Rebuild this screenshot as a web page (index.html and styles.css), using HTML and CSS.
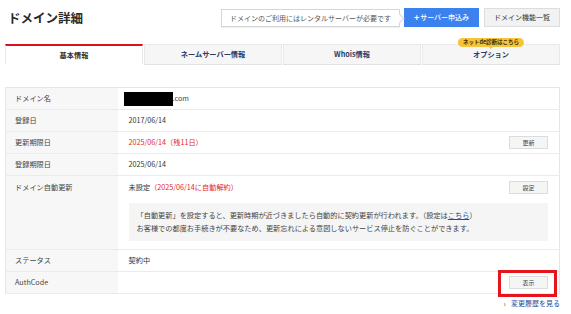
FILE: index.html
```html
<!DOCTYPE html>
<html lang="ja">
<head>
<meta charset="utf-8">
<title>ドメイン詳細</title>
<link rel="stylesheet" href="styles.css">
</head>
<body>
<div class="page">
  <header class="top">
    <h1 class="title">ドメイン詳細</h1>
    <div class="actions">
      <div class="callout">ドメインのご利用にはレンタルサーバーが必要です</div>
      <a class="btn-primary"><span class="plus">+</span>サーバー申込み</a>
      <a class="btn-gray">ドメイン機能一覧</a>
    </div>
  </header>

  <nav class="tabs">
    <div class="tab active">基本情報</div>
    <div class="tab">ネームサーバー情報</div>
    <div class="tab">Whois情報</div>
    <div class="tab">オプション<span class="badge">ネットde診断はこちら</span></div>
  </nav>

  <table class="info">
    <colgroup><col class="col-label"><col></colgroup>
    <tr>
      <th>ドメイン名</th>
      <td><span class="redact"></span><span class="tld">.com</span></td>
    </tr>
    <tr>
      <th>登録日</th>
      <td>2017/06/14</td>
    </tr>
    <tr>
      <th>更新期限日</th>
      <td><div class="cell"><span class="red">2025/06/14（残11日）</span><a class="sbtn">更新</a></div></td>
    </tr>
    <tr>
      <th>登録期限日</th>
      <td>2025/06/14</td>
    </tr>
    <tr class="row-top">
      <th>ドメイン自動更新</th>
      <td>
        <div class="cell"><span>未設定<span class="red">（2025/06/14に自動解約）</span></span><a class="sbtn">設定</a></div>
        <div class="note">「自動更新」を設定すると、更新時期が近づきましたら自動的に契約更新が行われます。（設定は<a class="link">こちら</a>）<br>お客様での都度お手続きが不要なため、更新忘れによる意図しないサービス停止を防ぐことができます。</div>
      </td>
    </tr>
    <tr>
      <th>ステータス</th>
      <td>契約中</td>
    </tr>
    <tr>
      <th>AuthCode</th>
      <td><div class="cell"><span></span><span class="mark"><a class="sbtn">表示</a><span class="annot"></span></span></div></td>
    </tr>
  </table>

  <div class="history"><span class="chev">›</span><a class="hist-link">変更履歴を見る</a></div>
</div>
</body>
</html>
```

FILE: styles.css
```css
* { box-sizing: border-box; }

body {
  margin: 0;
  background: #fff;
  color: #333;
  font-family: "Noto Sans CJK JP", "Noto Sans", sans-serif;
  font-size: 7.2px;
  line-height: 1.4;
}

.page {
  padding: 0 11px 0 5px;
}

/* header */
.top {
  display: flex;
  align-items: center;
  justify-content: space-between;
  margin-top: 8px;
  height: 19px;
}

.title {
  margin: 0 0 0 3px;
  font-size: 12.5px;
  font-weight: 700;
  line-height: 19px;
  color: #2b2b2b;
}

.actions {
  display: flex;
  align-items: center;
}

.callout {
  position: relative;
  height: 18px;
  line-height: 16px;
  padding: 0 8px;
  margin-right: 4px;
  border: 1px solid #d6d6d6;
  background: #fff;
  color: #555;
  font-size: 7px;
  box-shadow: 0 1px 1px rgba(0, 0, 0, 0.06);
}

.callout::after {
  content: "";
  position: absolute;
  right: -4px;
  top: 50%;
  width: 6px;
  height: 6px;
  margin-top: -3px;
  background: #fff;
  border-top: 1px solid #d6d6d6;
  border-right: 1px solid #d6d6d6;
  transform: rotate(45deg);
}

.btn-primary {
  display: flex;
  align-items: center;
  justify-content: center;
  width: 75px;
  height: 19px;
  background: #3b82ef;
  color: #fff;
  font-size: 7px;
  font-weight: 500;
  margin-right: 5px;
}

.plus {
  font-size: 9px;
  font-weight: 700;
  margin-right: 1px;
  line-height: 1;
}

.btn-gray {
  display: flex;
  align-items: center;
  justify-content: center;
  width: 76px;
  height: 19px;
  background: #f2f2f2;
  border: 1px solid #dddddd;
  color: #333;
  font-size: 7px;
}

/* tabs */
.tabs {
  display: grid;
  grid-template-columns: repeat(4, 1fr);
  gap: 1px;
  margin-top: 17px;
}

.tab {
  position: relative;
  display: flex;
  align-items: center;
  justify-content: center;
  height: 21px;
  background: #f6f6f6;
  border: 1px solid #e9e9e9;
  border-bottom-color: #e2e2e2;
  color: #2d3a63;
  font-weight: 700;
}

.tab.active {
  background: #fff;
  border-top: 2px solid #d8121c;
  border-bottom-color: #fff;
  color: #333;
}

.badge {
  position: absolute;
  top: -7px;
  left: 50%;
  transform: translateX(-50%);
  height: 9px;
  padding: 0 5px;
  border-radius: 5px;
  background: #f7c33c;
  color: #3a2c05;
  font-size: 5.5px;
  line-height: 9px;
  font-weight: 700;
  white-space: nowrap;
}

.badge::after {
  content: "";
  position: absolute;
  bottom: -2px;
  left: 50%;
  margin-left: -2px;
  border-left: 2px solid transparent;
  border-right: 2px solid transparent;
  border-top: 2px solid #f7c33c;
}

/* table */
.info {
  width: 100%;
  margin-top: 22px;
  border-collapse: collapse;
  table-layout: fixed;
  border: 1px solid #e6e6e6;
}

.col-label { width: 112px; }

.info th {
  height: 22px;
  padding: 0 9px;
  background: #f7f7f7;
  text-align: left;
  font-weight: 400;
  color: #444;
  vertical-align: middle;
  border-bottom: 1px solid #ebebeb;
}

.info td {
  height: 22px;
  padding: 0 11px;
  vertical-align: middle;
  border-bottom: 1px solid #ebebeb;
}

.row-top th,
.row-top td {
  vertical-align: top;
  padding-top: 5px;
  padding-bottom: 8px;
  line-height: 13px;
}

.cell {
  display: flex;
  align-items: center;
  justify-content: space-between;
}

.red { color: #e02a2a; }

.redact {
  display: inline-block;
  width: 49px;
  height: 14px;
  margin-left: -5px;
  background: #000;
  vertical-align: middle;
}

.tld { color: #444; }

.sbtn {
  display: flex;
  align-items: center;
  justify-content: center;
  width: 39px;
  height: 13px;
  border: 1px solid #dcdcdc;
  background: #f5f5f5;
  color: #444;
  font-size: 6px;
  line-height: 1;
}

.note {
  margin-top: 9px;
  padding: 6px 8px;
  background: #f5f5f5;
  line-height: 13px;
  color: #444;
}

.link {
  color: #1d4f9f;
  text-decoration: underline;
}

.mark {
  position: relative;
  display: block;
}

.annot {
  position: absolute;
  left: -11px;
  right: -9px;
  top: -6px;
  bottom: -8px;
  border: 3.5px solid #e8141c;
}

/* footer link */
.history {
  display: flex;
  justify-content: flex-end;
  align-items: center;
  margin-top: 5px;
  font-size: 7px;
}

.chev {
  color: #d8121c;
  font-size: 8px;
  line-height: 1;
  margin-right: 5px;
}

.hist-link {
  color: #1d4f9f;
}
```
